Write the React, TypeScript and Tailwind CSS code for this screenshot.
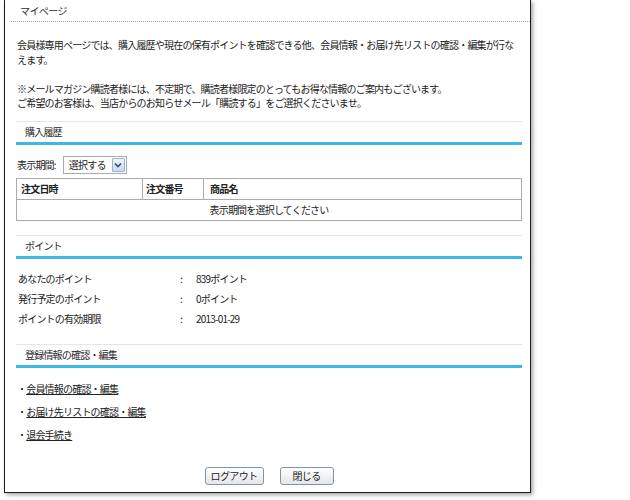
import React from "react";

const font = { fontFamily: '"Noto Sans CJK JP", "Noto Sans", sans-serif' };

function SectionHeader({ title, className = "" }: { title: string; className?: string }) {
  return (
    <div
      className={`h-[24px] border-t border-t-[#e6e6e6] border-b-[3px] border-b-[#3db8e6] pl-[9px] flex items-center ${className}`}
    >
      <span className="text-[10px] tracking-[-0.8px] text-[#2a2a2a]">{title}</span>
    </div>
  );
}

export default function App() {
  return (
    <div className="w-[630px] h-[500px] bg-white overflow-hidden text-[#222]" style={font}>
      <div className="ml-[4px] w-[527px] border-x border-b border-[#1c1c1c] bg-white shadow-[2px_2px_4px_rgba(0,0,0,0.35)] pb-[7px]">
        <div className="ml-[6px] h-[22px] pl-[9px] border-b border-dotted border-[#aaa690] flex items-center">
          <span className="text-[10px] tracking-[-0.6px] text-[#333]">マイページ</span>
        </div>

        <div className="pl-[11px] pr-[8px]">
          <div className="mt-[16px] pl-[1px] text-[10px] leading-[14.5px] tracking-[-0.8px] whitespace-nowrap">
            <p>
              会員様専用ページでは、購入履歴や現在の保有ポイントを確認できる他、会員情報・お届け先リストの確認・編集が行な
              <br />
              えます。
            </p>
            <p className="mt-[14.5px]">
              ※メールマガジン購読者様には、不定期で、購読者様限定のとってもお得な情報のご案内もございます。
              <br />
              ご希望のお客様は、当店からのお知らせメール「購読する」をご選択くださいませ。
            </p>
          </div>

          <SectionHeader title="購入履歴" className="mt-[10px]" />

          <div className="mt-[11px] flex items-center h-[18px] pl-[1px]">
            <span className="text-[10px] tracking-[-0.8px]">表示期間:</span>
            <div className="ml-[7px] w-[64px] h-[18px] border border-[#a5acb5] flex items-center justify-between pl-[5px] pr-[1px]">
              <span className="text-[10px] tracking-[-0.8px]">選択する</span>
              <span className="w-[13px] h-[14px] border border-[#9ab3d5] rounded-[1px] bg-gradient-to-b from-[#eef4fc] to-[#c9daf0] flex items-center justify-center">
                <svg width="8" height="6" viewBox="0 0 8 6">
                  <path d="M1 1.5 L4 4.5 L7 1.5" stroke="#2c4c7c" strokeWidth="1.6" fill="none" />
                </svg>
              </span>
            </div>
          </div>

          <table className="mt-[4px] w-[506px] border-collapse text-[10px] tracking-[-0.8px]">
            <thead>
              <tr className="h-[21px]">
                <th className="w-[126px] border border-[#ababab] text-left font-bold pl-[4px]">注文日時</th>
                <th className="w-[61px] border border-[#ababab] text-left font-bold pl-[3px]">注文番号</th>
                <th className="border border-[#ababab] text-left font-bold pl-[6px]">商品名</th>
              </tr>
            </thead>
            <tbody>
              <tr className="h-[21px]">
                <td colSpan={3} className="border border-[#ababab] text-center">
                  表示期間を選択してください
                </td>
              </tr>
            </tbody>
          </table>

          <SectionHeader title="ポイント" className="mt-[14px]" />

          <div className="mt-[10px] text-[10px] tracking-[-0.8px] pl-[2px]">
            {[
              ["あなたのポイント", "839ポイント"],
              ["発行予定のポイント", "0ポイント"],
              ["ポイントの有効期限", "2013-01-29"],
            ].map(([k, v]) => (
              <div key={k} className="h-[20px] flex items-center">
                <span className="w-[162px]">{k}</span>
                <span className="w-[16px]">:</span>
                <span>{v}</span>
              </div>
            ))}
          </div>

          <SectionHeader title="登録情報の確認・編集" className="mt-[15px]" />

          <div className="mt-[9px] text-[10px] tracking-[-0.8px] pl-[1px]">
            {["会員情報の確認・編集", "お届け先リストの確認・編集", "退会手続き"].map((t) => (
              <div key={t} className="h-[23px] flex items-center">
                <span>・</span>
                <a href="#" className="underline text-[#222]">
                  {t}
                </a>
              </div>
            ))}
          </div>

          <div className="mt-[21px] flex justify-center gap-[16px]">
            <button className="w-[59px] h-[18px] border border-[#7f93ab] rounded-[3px] bg-gradient-to-b from-white to-[#e6e6e6] text-[10px] tracking-[-0.6px] text-[#222] flex items-center justify-center">
              ログアウト
            </button>
            <button className="w-[54px] h-[18px] border border-[#7f93ab] rounded-[3px] bg-gradient-to-b from-white to-[#e6e6e6] text-[10px] tracking-[-0.6px] text-[#222] flex items-center justify-center">
              閉じる
            </button>
          </div>
        </div>
      </div>
    </div>
  );
}
